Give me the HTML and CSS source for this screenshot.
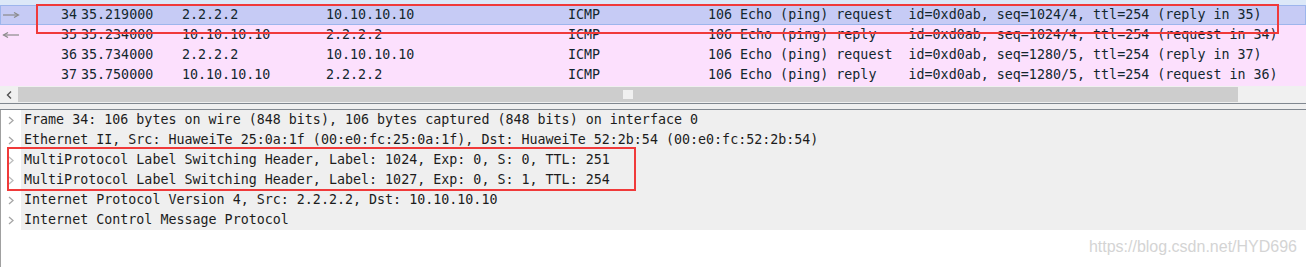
FILE: index.html
```html
<!DOCTYPE html>
<html>
<head>
<meta charset="utf-8">
<title>Wireshark MPLS</title>
<link rel="stylesheet" href="styles.css">
</head>
<body>
<div class="app">
  <div class="plist">
    <div class="pstrip"></div>
    <div class="prow sel">
      <span class="c-arrow"><svg width="18" height="6" viewBox="0 0 18 6"><path d="M1 3H16" stroke="#8a8a8a" stroke-width="1.2"/><path d="M12 0.5L16.5 3L12 5.5" fill="none" stroke="#8a8a8a" stroke-width="1.2"/></svg></span>
      <span class="c-no">34</span><span class="c-time">35.219000</span><span class="c-src">2.2.2.2</span><span class="c-dst">10.10.10.10</span><span class="c-proto">ICMP</span><span class="c-len">106</span><span class="c-info">Echo (ping) request  id=0xd0ab, seq=1024/4, ttl=254 (reply in 35)</span>
    </div>
    <div class="prow">
      <span class="c-arrow"><svg width="18" height="6" viewBox="0 0 18 6"><path d="M1.5 3H17" stroke="#8a8a8a" stroke-width="1.2"/><path d="M6 0.5L1.5 3L6 5.5" fill="none" stroke="#8a8a8a" stroke-width="1.2"/></svg></span>
      <span class="c-no">35</span><span class="c-time">35.234000</span><span class="c-src">10.10.10.10</span><span class="c-dst">2.2.2.2</span><span class="c-proto">ICMP</span><span class="c-len">106</span><span class="c-info">Echo (ping) reply    id=0xd0ab, seq=1024/4, ttl=254 (request in 34)</span>
    </div>
    <div class="prow">
      <span class="c-arrow"></span>
      <span class="c-no">36</span><span class="c-time">35.734000</span><span class="c-src">2.2.2.2</span><span class="c-dst">10.10.10.10</span><span class="c-proto">ICMP</span><span class="c-len">106</span><span class="c-info">Echo (ping) request  id=0xd0ab, seq=1280/5, ttl=254 (reply in 37)</span>
    </div>
    <div class="prow">
      <span class="c-arrow"></span>
      <span class="c-no">37</span><span class="c-time">35.750000</span><span class="c-src">10.10.10.10</span><span class="c-dst">2.2.2.2</span><span class="c-proto">ICMP</span><span class="c-len">106</span><span class="c-info">Echo (ping) reply    id=0xd0ab, seq=1280/5, ttl=254 (request in 36)</span>
    </div>
  </div>

  <div class="hscroll">
    <div class="sb-btn"><svg width="6" height="8" viewBox="0 0 6 8"><path d="M5 0.5L1.5 4L5 7.5" fill="none" stroke="#505050" stroke-width="1.4"/></svg></div>
    <div class="sb-thumb"><div class="grip"></div></div>
    <div class="sb-rest"></div>
  </div>

  <div class="splitter"><div class="splitter-bar"></div></div>

  <div class="details">
    <div class="drow"><span class="exp"><svg width="6" height="9" viewBox="0 0 6 9"><path d="M1 1L5 4.5L1 8" fill="none" stroke="#a6a6a6" stroke-width="1.3"/></svg></span><span class="dtext">Frame 34: 106 bytes on wire (848 bits), 106 bytes captured (848 bits) on interface 0</span></div>
    <div class="drow"><span class="exp"><svg width="6" height="9" viewBox="0 0 6 9"><path d="M1 1L5 4.5L1 8" fill="none" stroke="#a6a6a6" stroke-width="1.3"/></svg></span><span class="dtext">Ethernet II, Src: HuaweiTe 25:0a:1f (00:e0:fc:25:0a:1f), Dst: HuaweiTe 52:2b:54 (00:e0:fc:52:2b:54)</span></div>
    <div class="drow"><span class="exp"><svg width="6" height="9" viewBox="0 0 6 9"><path d="M1 1L5 4.5L1 8" fill="none" stroke="#bcbcbc" stroke-width="1.3"/></svg></span><span class="dtext">MultiProtocol Label Switching Header, Label: 1024, Exp: 0, S: 0, TTL: 251</span></div>
    <div class="drow"><span class="exp"><svg width="6" height="9" viewBox="0 0 6 9"><path d="M1 1L5 4.5L1 8" fill="none" stroke="#bcbcbc" stroke-width="1.3"/></svg></span><span class="dtext">MultiProtocol Label Switching Header, Label: 1027, Exp: 0, S: 1, TTL: 254</span></div>
    <div class="drow"><span class="exp"><svg width="6" height="9" viewBox="0 0 6 9"><path d="M1 1L5 4.5L1 8" fill="none" stroke="#a6a6a6" stroke-width="1.3"/></svg></span><span class="dtext">Internet Protocol Version 4, Src: 2.2.2.2, Dst: 10.10.10.10</span></div>
    <div class="drow"><span class="exp"><svg width="6" height="9" viewBox="0 0 6 9"><path d="M1 1L5 4.5L1 8" fill="none" stroke="#a6a6a6" stroke-width="1.3"/></svg></span><span class="dtext">Internet Control Message Protocol</span></div>
    <div class="watermark">https://blog.csdn.net/HYD696</div>
  </div>

  <div class="mark mark-row"></div>
  <div class="mark mark-mpls"></div>
</div>
</body>
</html>
```

FILE: styles.css
```css
* { box-sizing: border-box; }
html, body {
  margin: 0;
  padding: 0;
  background: #ffffff;
}
.app {
  position: relative;
  width: 1306px;
  height: 267px;
  overflow: hidden;
  font-family: "DejaVu Sans Mono", "Liberation Mono", monospace;
  font-size: 13.33px;
}

/* packet list */
.pstrip {
  height: 5px;
  background: #dce8f8;
}
.prow {
  display: flex;
  height: 20px;
  line-height: 20px;
  white-space: pre;
  color: #12272e;
  background: #fce0fd;
}
.prow.sel {
  background: #c6cbf5;
  box-shadow: inset 0 0 0 1px #9db5ec;
}
.c-arrow {
  width: 22px;
  flex: none;
  display: flex;
  align-items: center;
  padding-left: 2px;
}
.c-no { width: 55px; flex: none; text-align: right; }
.c-time { width: 105px; flex: none; padding-left: 4px; }
.c-src { width: 144px; flex: none; }
.c-dst { width: 242px; flex: none; }
.c-proto { width: 120px; flex: none; }
.c-len { width: 44px; flex: none; text-align: right; }
.c-info { flex: 1; padding-left: 8px; }
.prow:last-child { height: 21px; }

/* horizontal scrollbar */
.hscroll {
  display: flex;
  height: 16px;
  background: #f0f0f0;
}
.sb-btn {
  width: 18px;
  flex: none;
  display: flex;
  align-items: center;
  justify-content: center;
  padding-top: 1px;
}
.sb-thumb {
  width: 1220px;
  flex: none;
  margin-top: 1px;
  background: #cdcdcd;
  display: flex;
  align-items: center;
  justify-content: center;
}
.grip {
  width: 10px;
  height: 9px;
  background: #f0f0f0;
}
.sb-rest { flex: 1; }

/* splitter */
.splitter {
  padding-top: 1px;
  background: #efefef;
}
.splitter-bar {
  height: 7px;
  border-top: 1px solid #80878f;
  border-bottom: 1px solid #80878f;
}

/* packet details */
.details {
  position: relative;
  height: 157px;
  border-left: 1px solid #a0a0a0;
  background: #ffffff;
}
.drow {
  display: flex;
  height: 20px;
  line-height: 20px;
  white-space: pre;
  color: #1c1c1c;
}
.exp {
  width: 20px;
  flex: none;
  display: flex;
  align-items: center;
  padding-left: 7px;
}
.dtext {
  flex: 1;
  background: #efefef;
  padding-left: 3px;
}
.watermark {
  position: absolute;
  right: 9px;
  top: 128px;
  font-family: "Liberation Sans", Arial, sans-serif;
  font-size: 16px;
  color: #d4d4d4;
}

/* annotation boxes */
.mark {
  position: absolute;
  border: 2px solid #f03a3a;
}
.mark-row {
  left: 36px;
  top: 4px;
  width: 1243px;
  height: 30px;
}
.mark-mpls {
  left: 7px;
  top: 147px;
  width: 629px;
  height: 44px;
}
```
